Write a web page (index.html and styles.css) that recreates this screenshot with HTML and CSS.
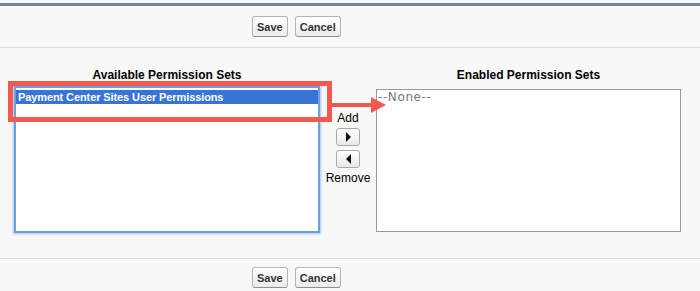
FILE: index.html
```html
<!DOCTYPE html>
<html>
<head>
<meta charset="utf-8">
<link rel="stylesheet" href="styles.css">
</head>
<body>
<div class="page">
  <div class="topbar"></div>
  <div class="btnrow btnrow-top">
    <button class="btn">Save</button>
    <button class="btn">Cancel</button>
  </div>
  <div class="picker">
    <div class="col col-left">
      <div class="heading">Available Permission Sets</div>
      <div class="listbox listbox-focus">
        <div class="option selected">Payment Center Sites User Permissions</div>
      </div>
    </div>
    <div class="col-mid">
      <div class="midlabel">Add</div>
      <button class="arrowbtn" aria-label="Add"><span class="tri tri-right"></span></button>
      <button class="arrowbtn" aria-label="Remove"><span class="tri tri-left"></span></button>
      <div class="midlabel">Remove</div>
    </div>
    <div class="col col-right">
      <div class="heading">Enabled Permission Sets</div>
      <div class="listbox listbox-plain">
        <div class="option none">--None--</div>
      </div>
    </div>
  </div>
  <div class="btnrow btnrow-bottom">
    <button class="btn">Save</button>
    <button class="btn">Cancel</button>
  </div>
  <svg class="annotation" width="700" height="291" viewBox="0 0 700 291">
    <rect x="10.5" y="83.5" width="319" height="36" fill="none" stroke="#f4594d" stroke-width="5"/>
    <rect x="331" y="103" width="42" height="4" fill="#f4594d"/>
    <polygon points="371,97 371,113 386,105" fill="#f4594d"/>
  </svg>
</div>
</body>
</html>
```

FILE: styles.css
```css
html, body {
  margin: 0;
  padding: 0;
  background: #f8f8f8;
}
.page {
  position: relative;
  width: 700px;
  height: 291px;
  overflow: hidden;
  padding-top: 3px;
  box-sizing: border-box;
  font-family: "Liberation Sans", Arial, sans-serif;
  color: #000;
}
.topbar {
  height: 3px;
  background: #7a8399;
}
.btnrow {
  display: flex;
  justify-content: flex-start;
  gap: 7px;
  padding-left: 252px;
}
.btnrow-top {
  padding-top: 10px;
  padding-bottom: 10px;
  border-bottom: 1px solid #dcdcdc;
}
.btnrow-bottom {
  padding-top: 8px;
  border-top: 1px solid #dcdcdc;
}
.btn {
  height: 21px;
  padding: 0 4px;
  margin: 0;
  font-family: "Liberation Sans", Arial, sans-serif;
  font-weight: bold;
  font-size: 11px;
  color: #333;
  background: linear-gradient(#ffffff, #ececec);
  border: 1px solid #b5b5b5;
  border-bottom-color: #8f8f8f;
  border-radius: 3px;
}
.picker {
  display: flex;
  padding-left: 14px;
  padding-top: 20px;
  padding-bottom: 25px;
}
.col {
  display: flex;
  flex-direction: column;
}
.col-left {
  width: 306px;
}
.col-right {
  width: 305px;
}
.heading {
  font-weight: bold;
  font-size: 12px;
  line-height: 14px;
  text-align: center;
  margin-bottom: 4px;
}
.listbox {
  background: #fff;
  box-sizing: border-box;
}
.listbox-focus {
  height: 147px;
  border: 2px solid #6d9fdf;
  box-shadow: 0 0 2px 1px #a8c7ee;
}
.listbox-plain {
  height: 143px;
  margin-top: 3px;
  border: 1px solid #999;
}
.option {
  font-size: 11px;
  line-height: 14px;
  padding-left: 2px;
  white-space: nowrap;
}
.selected {
  margin-top: 2px;
  background: #3874d6;
  color: #fff;
  font-weight: bold;
  font-family: "Liberation Sans", Arial, sans-serif;
  font-size: 11px;
  letter-spacing: -0.1px;
}
.none {
  color: #777;
  font-family: "DejaVu Sans", "Liberation Sans", sans-serif;
  font-size: 12px;
  letter-spacing: 0.6px;
  padding-left: 1px;
}
.col-mid {
  width: 56px;
  display: flex;
  flex-direction: column;
  align-items: center;
  padding-top: 44px;
  gap: 4px;
}
.midlabel {
  font-size: 12px;
  line-height: 12px;
}
.arrowbtn {
  width: 24px;
  height: 18px;
  margin: 0;
  padding: 0;
  display: flex;
  align-items: center;
  justify-content: center;
  background: linear-gradient(#ffffff, #e9e9e9);
  border: 1px solid #a8a8a8;
  border-radius: 3px;
}
.tri {
  width: 0;
  height: 0;
  border-top: 5px solid transparent;
  border-bottom: 5px solid transparent;
}
.tri-right {
  border-left: 5px solid #111;
}
.tri-left {
  border-right: 5px solid #111;
}
.annotation {
  position: absolute;
  left: 0;
  top: 0;
  pointer-events: none;
}
```
